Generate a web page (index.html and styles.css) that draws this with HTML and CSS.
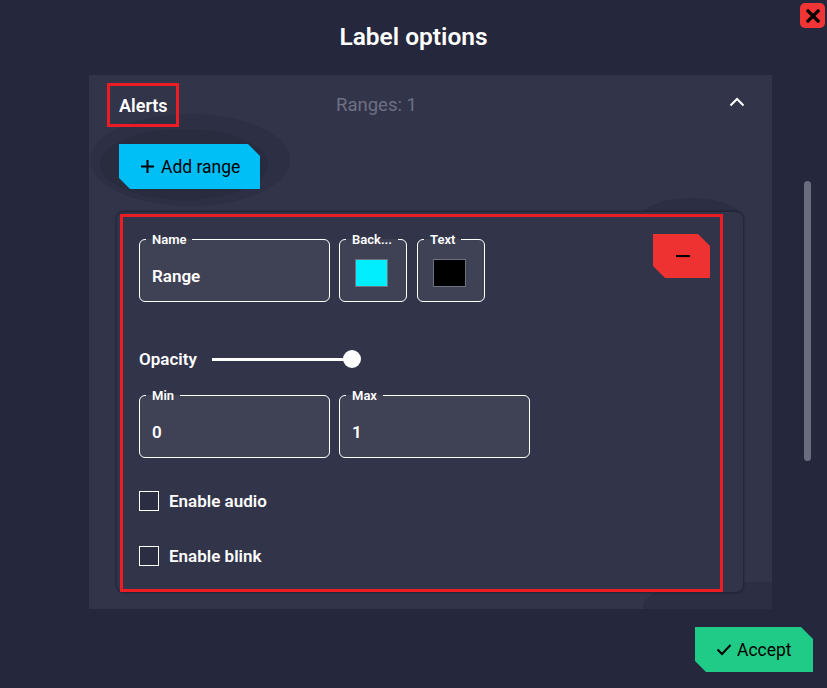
FILE: index.html
```html
<!DOCTYPE html>
<html lang="en">
<head>
<meta charset="utf-8">
<title>Label options</title>
<link rel="stylesheet" href="styles.css">
</head>
<body>
<div class="dialog">
  <header class="dialog-head">
    <h1 class="dialog-title">Label options</h1>
  </header>
  <button class="close-btn" aria-label="Close">
    <svg width="14" height="14" viewBox="0 0 14 14"><path d="M2 2L12 12M12 2L2 12" stroke="#000" stroke-width="3.2" stroke-linecap="square"/></svg>
  </button>

  <div class="content-row">
    <section class="panel">
      <div class="panel-head">
        <span class="alerts-title">Alerts</span>
        <span class="ranges-count">Ranges: 1</span>
        <svg class="chevron" width="16" height="10" viewBox="0 0 16 10"><path d="M1.5 8.5L8 2L14.5 8.5" fill="none" stroke="#fff" stroke-width="2"/></svg>
      </div>

      <div class="add-wrap">
        <button class="add-btn">
          <svg width="15" height="15" viewBox="0 0 15 15"><path d="M7.5 1V14M1 7.5H14" stroke="#000" stroke-width="2"/></svg>
          <span>Add range</span>
        </button>
      </div>

      <div class="range-card">
        <div class="range-box">
          <div class="row top-row">
            <fieldset class="field name-field">
              <legend>Name</legend>
              <div class="field-value">Range</div>
            </fieldset>
            <fieldset class="field color-field">
              <legend>Back...</legend>
              <div class="field-value center"><span class="swatch cyan"></span></div>
            </fieldset>
            <fieldset class="field color-field text-color">
              <legend>Text</legend>
              <div class="field-value center"><span class="swatch black"></span></div>
            </fieldset>
            <button class="remove-btn" aria-label="Remove range">
              <svg width="14" height="4" viewBox="0 0 14 4"><path d="M0 2H14" stroke="#000" stroke-width="2.2"/></svg>
            </button>
          </div>

          <div class="row opacity-row">
            <span class="opacity-label">Opacity</span>
            <div class="slider">
              <span class="slider-track"></span>
              <span class="slider-thumb"></span>
            </div>
          </div>

          <div class="row minmax-row">
            <fieldset class="field minmax-field">
              <legend>Min</legend>
              <div class="field-value">0</div>
            </fieldset>
            <fieldset class="field minmax-field">
              <legend>Max</legend>
              <div class="field-value">1</div>
            </fieldset>
          </div>

          <label class="check-row audio-row"><span class="checkbox"></span>Enable audio</label>
          <label class="check-row blink-row"><span class="checkbox"></span>Enable blink</label>
        </div>
      </div>
    </section>

    <div class="scrollbar"><div class="scroll-thumb"></div></div>
  </div>

  <footer class="dialog-foot">
    <button class="accept-btn">
      <svg width="16" height="13" viewBox="0 0 16 13"><path d="M1.5 6.5L6 11L14.5 2" fill="none" stroke="#000" stroke-width="2"/></svg>
      <span>Accept</span>
    </button>
  </footer>
</div>
</body>
</html>
```

FILE: styles.css
```css
* { box-sizing: border-box; }

body {
  margin: 0;
  background: #25273c;
  font-family: Roboto, "Liberation Sans", Arial, sans-serif;
  color: #fff;
}

button {
  font-family: inherit;
  border: 0;
  padding: 0;
  cursor: pointer;
}

.dialog {
  position: relative;
  width: 827px;
  height: 688px;
  overflow: hidden;
}

.dialog-head {
  height: 75px;
  display: flex;
  justify-content: center;
  padding-bottom: 3px;
  align-items: center;
}

.dialog-title {
  margin: 0;
  font-size: 24.5px;
  font-weight: 600;
  color: #fff;
}

.close-btn {
  position: absolute;
  top: 3px;
  right: 2px;
  width: 25px;
  height: 25px;
  border-radius: 5px;
  background: #ef3535;
  display: flex;
  align-items: center;
  justify-content: center;
}

.content-row {
  display: flex;
  padding-left: 89px;
}

.panel {
  position: relative;
  z-index: 0;
  width: 683px;
  height: 534px;
  background: #32344a;
  overflow: hidden;
}

.panel-head {
  position: relative;
  z-index: 2;
  display: flex;
  align-items: center;
  margin-top: 8px;
  padding-left: 18px;
  height: 44px;
}

.alerts-title {
  width: 72px;
  height: 44px;
  border: 3px solid #ed1c24;
  padding-left: 9px;
  display: flex;
  align-items: center;
  font-size: 18px;
  font-weight: 600;
  white-space: nowrap;
}

.ranges-count {
  margin-left: 157px;
  font-size: 18.5px;
  color: #6e7083;
}

.chevron {
  margin-left: auto;
  margin-right: 27px;
  margin-bottom: 6px;
}

.add-wrap {
  position: relative;
  margin: 17px 0 0 30px;
  width: 141px;
  height: 45px;
}

/* halo around the add button */
.add-wrap::before {
  content: "";
  position: absolute;
  left: -29px;
  right: -30px;
  top: -30px;
  bottom: -17px;
  border-radius: 50%;
  background: #2d2f44;
}

.add-wrap::after {
  content: "";
  position: absolute;
  left: -19px;
  right: -8px;
  top: -15px;
  bottom: -11px;
  border-radius: 50%;
  background: #292b3f;
}

.add-btn {
  position: relative;
  z-index: 1;
  width: 141px;
  height: 45px;
  background: #00bff6;
  color: #000;
  font-size: 17.5px;
  display: flex;
  align-items: center;
  gap: 6px;
  padding-left: 21px;
  clip-path: polygon(0 0, calc(100% - 12px) 0, 100% 12px, 100% 100%, 11px 100%, 0 calc(100% - 11px));
}

.range-card {
  position: relative;
  margin: 23px 0 0 28px;
  width: 626px;
  height: 380px;
  border-radius: 7px;
  background: #32344a;
  box-shadow: 0 0 2px 1px rgba(20, 21, 34, 0.55);
  padding: 2px 20px 0 3px;
}

/* soft shade peeking out around the card edges */
.range-card::before {
  content: "";
  position: absolute;
  right: 2px;
  top: -14px;
  width: 100px;
  height: 40px;
  border-radius: 50%;
  background: #2c2e43;
  z-index: -1;
}

.range-card::after {
  content: "";
  position: absolute;
  right: -40px;
  bottom: -40px;
  width: 140px;
  height: 50px;
  border-radius: 50% 0 0 0;
  background: #2c2e43;
  z-index: -1;
}

.range-box {
  position: relative;
  width: 603px;
  height: 378px;
  border: 3px solid #ed1c24;
  padding: 15px 10px 0 16px;
  background: #32344a;
}

.row {
  display: flex;
}

.top-row {
  align-items: flex-start;
  gap: 9px;
}

.field {
  margin: 0;
  padding: 0 0 0 6px;
  border: 1px solid #fff;
  border-radius: 6px;
  background: #3f4155;
  min-width: 0;
}

.field legend {
  padding: 0 6px;
  font-size: 13px;
  line-height: 15px;
  font-weight: 600;
  color: #fff;
  white-space: nowrap;
}

.field-value {
  height: 54px;
  padding: 4px 0 0 6px;
  display: flex;
  align-items: center;
  font-size: 17px;
  font-weight: 600;
}

.field-value.center {
  justify-content: center;
  padding: 0 10px 2px 0;
}

.name-field { width: 191px; }
.color-field { width: 68px; }
.text-color { margin-left: 1px; }
.minmax-field { width: 191px; }

.swatch {
  width: 33px;
  height: 28px;
  border: 1px solid #6f7080;
}

.swatch.cyan { background: #00eeff; }
.swatch.black { background: #000; }

.remove-btn {
  margin-left: auto;
  margin-top: 2px;
  width: 57px;
  height: 44px;
  background: #ee3131;
  display: flex;
  align-items: center;
  justify-content: center;
  padding-left: 2px;
  clip-path: polygon(0 0, calc(100% - 12px) 0, 100% 12px, 100% 100%, 12px 100%, 0 calc(100% - 12px));
}

.opacity-row {
  margin-top: 45px;
  height: 24px;
  align-items: center;
}

.opacity-label {
  font-size: 17px;
  font-weight: 600;
  width: 73px;
}

.slider {
  display: flex;
  align-items: center;
}

.slider-track {
  width: 140px;
  height: 3px;
  background: #fff;
}

.slider-thumb {
  width: 18px;
  height: 18px;
  border-radius: 50%;
  background: #fff;
  margin-left: -9px;
}

.minmax-row {
  margin-top: 17px;
  gap: 9px;
}

.check-row {
  display: flex;
  align-items: center;
  gap: 10px;
  height: 20px;
  font-size: 17px;
  font-weight: 600;
}

.audio-row { margin-top: 33px; }
.blink-row { margin-top: 35px; }

.checkbox {
  width: 20px;
  height: 20px;
  border: 1px solid #fff;
  background: #2b2d42;
}

.scrollbar {
  margin-left: 32px;
  width: 7px;
}

.scroll-thumb {
  margin-top: 106px;
  height: 280px;
  border-radius: 4px;
  background: #6b6d7e;
}

.dialog-foot {
  display: flex;
  justify-content: flex-end;
  padding-right: 14px;
  margin-top: 18px;
}

.accept-btn {
  width: 118px;
  height: 45px;
  background: #1fcb86;
  color: #000;
  font-size: 17.5px;
  display: flex;
  align-items: center;
  gap: 5px;
  padding-left: 21px;
  clip-path: polygon(0 0, calc(100% - 12px) 0, 100% 12px, 100% 100%, 11px 100%, 0 calc(100% - 11px));
}
```
